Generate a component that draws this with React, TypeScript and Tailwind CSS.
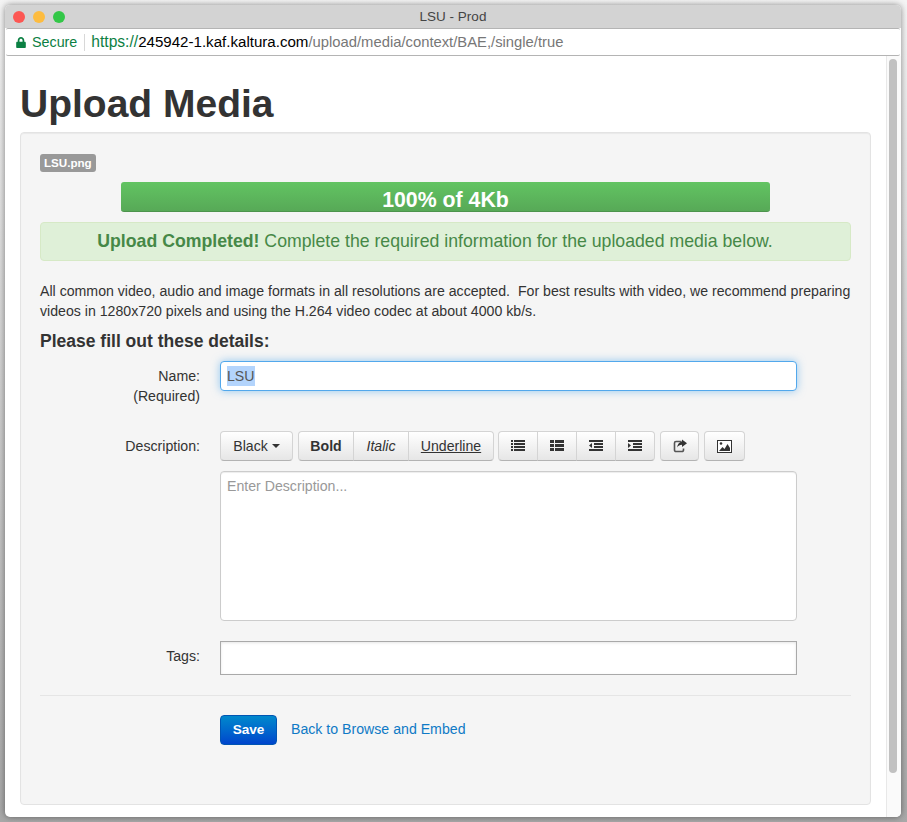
import { FaLock } from "react-icons/fa";

const btn =
  "h-[30px] flex items-center justify-center border border-[#d4d4d4] border-b-[#b3b3b3] bg-gradient-to-b from-white to-[#e6e6e6] text-[14.1px] text-[#333]";

function ListIcon() {
  return (
    <svg width="14" height="14" viewBox="0 0 14 14" fill="#333">
      {[1, 4, 7, 10].map((y) => (
        <g key={y}>
          <rect x="0" y={y} width="2" height="2" />
          <rect x="3" y={y} width="11" height="2" />
        </g>
      ))}
    </svg>
  );
}

function ThListIcon() {
  return (
    <svg width="14" height="14" viewBox="0 0 14 14" fill="#333">
      {[1, 5, 9].map((y) => (
        <g key={y}>
          <rect x="0" y={y} width="4" height="3" />
          <rect x="5" y={y} width="9" height="3" />
        </g>
      ))}
    </svg>
  );
}

function IndentIcon({ right }: { right?: boolean }) {
  return (
    <svg width="14" height="14" viewBox="0 0 14 14" fill="#333">
      <rect x="0" y="1" width="14" height="2" />
      <rect x="5" y="4" width="9" height="2" />
      <rect x="5" y="7" width="9" height="2" />
      <rect x="0" y="10" width="14" height="2" />
      {right ? <path d="M0 4l3 2.5L0 9z" /> : <path d="M3 4L0 6.5 3 9z" />}
    </svg>
  );
}

function ShareIcon() {
  return (
    <svg width="14" height="14" viewBox="0 0 14 14" fill="none">
      <path d="M8.5 2.5H3A1.5 1.5 0 0 0 1.5 4v7A1.5 1.5 0 0 0 3 12.5h6a1.5 1.5 0 0 0 1.5-1.5V9.5" stroke="#555" strokeWidth="1.6" />
      <path d="M9 0.5l5 3.7-5 3.7V5.8C6.8 5.8 5.2 6.6 4.2 8.6 4.4 5.4 6.2 3 9 2.6z" fill="#333" />
    </svg>
  );
}

function PictureIcon() {
  return (
    <svg width="15" height="13" viewBox="0 0 15 13">
      <rect x="0.5" y="0.5" width="14" height="12" fill="#fff" stroke="#333" />
      <path d="M2 11l3.5-4 2 2L10.5 4 13 8v3z" fill="#333" />
      <circle cx="4" cy="3.5" r="1.3" fill="#333" />
    </svg>
  );
}

export default function App() {
  return (
    <div className="w-[907px] h-[822px] overflow-hidden bg-gradient-to-b from-[#f4f4f4] to-[#a8a8a8] pl-[5px] pt-[5px] font-['Liberation_Sans',Arial,sans-serif] text-[14.15px] leading-[20px] text-[#333]">
      <div className="w-[896px] h-[812px] rounded-[5px] bg-white overflow-hidden flex flex-col shadow-[0_0_6px_rgba(0,0,0,0.45)]">
        <div className="h-[23px] shrink-0 bg-[#d3d3d3] flex items-center relative">
          <div className="flex gap-[8px] pl-[8px]">
            <span className="w-[12px] h-[12px] rounded-full bg-[#fc5753]" />
            <span className="w-[12px] h-[12px] rounded-full bg-[#fdbc40]" />
            <span className="w-[12px] h-[12px] rounded-full bg-[#33c748]" />
          </div>
          <span className="absolute left-0 right-0 top-[2px] text-center text-[13.5px] text-[#444]">LSU - Prod</span>
        </div>
        <div className="h-[28px] shrink-0 bg-white border-y border-[#b4b4b4] mx-[1px] flex items-center pl-[10px] text-[15px] rounded-[2px]">
          <FaLock className="text-[#0b8043] w-[10px] h-[11px]" />
          <span className="ml-[6px] text-[14.3px] text-[#0b8043]">Secure</span>
          <span className="w-px h-[17px] bg-[#d8d8d8] ml-[7px] mr-[6px]" />
          <span className="text-[15.6px] text-[#0b8043]">https://</span>
          <span className="text-[15.1px] text-black">245942-1.kaf.kaltura.com</span>
          <span className="text-[14.8px] text-[#777]">/upload/media/context/BAE,/single/true</span>
        </div>
        <div className="flex-1 flex min-h-0">
          <div className="flex-1 pl-[15px] pr-[15px] min-w-0">
            <h1 className="mt-[24px] text-[39px] leading-[48px] font-bold text-[#333]">Upload Media</h1>
            <div className="mt-[4px] h-[673px] border border-[#e3e3e3] rounded-[4px] bg-[#f5f5f5] px-[19px] pt-[21px] shadow-[inset_0_1px_1px_rgba(0,0,0,0.05)]">
              <span className="inline-block h-[18px] rounded-[3px] bg-[#999] px-[4px] text-[11.6px] leading-[18px] font-bold text-white align-top">
                LSU.png
              </span>
              <div className="mt-[8px] mx-[81px] h-[30px] rounded-[3px] bg-gradient-to-b from-[#62c462] to-[#57a957] border-b border-[#4d944d] text-center font-bold text-white">
                <span className="block text-[21.3px] leading-[36px]">100% of 4Kb</span>
              </div>
              <div className="mt-[10px] h-[39px] rounded-[4px] border border-[#d6e9c6] bg-[#dff0d8] pr-[21px] text-center text-[17.7px] leading-[37px] text-[#468847]">
                <b>Upload Completed!</b> Complete the required information for the uploaded media below.
              </div>
              <p className="mt-[20px]">
                All common video, audio and image formats in all resolutions are accepted.&nbsp; For best results with video, we recommend preparing videos in 1280x720 pixels and using the H.264 video codec at about 4000 kb/s.
              </p>
              <h4 className="mt-[10px] text-[17.5px] leading-[20px] font-bold">Please fill out these details:</h4>

              <div className="mt-[10px] flex">
                <div className="w-[160px] text-right pt-[5px] shrink-0">
                  Name:
                  <br />
                  (Required)
                </div>
                <div className="ml-[20px] w-[577px] h-[30px] rounded-[4px] border border-[#52a8ec] bg-white shadow-[0_0_8px_rgba(82,168,236,0.6)] flex items-center pl-[6px]">
                  <span className="bg-[#b3d4fc] text-[#555]">LSU</span>
                </div>
              </div>

              <div className="mt-[25px] flex">
                <div className="w-[160px] text-right pt-[5px] shrink-0">Description:</div>
                <div className="ml-[20px] w-[577px]">
                  <div className="flex gap-[5px]">
                    <button className={btn + " w-[73px] rounded-[4px] gap-[4px]"}>
                      Black
                      <span className="w-0 h-0 border-x-[4px] border-x-transparent border-t-[4px] border-t-[#333]" />
                    </button>
                    <div className="flex">
                      <button className={btn + " w-[56px] rounded-l-[4px] font-bold"}>Bold</button>
                      <button className={btn + " w-[56px] -ml-px italic"}>Italic</button>
                      <button className={btn + " w-[86px] -ml-px rounded-r-[4px] underline"}>Underline</button>
                    </div>
                    <div className="flex -ml-px">
                      <button className={btn + " w-[40px] rounded-l-[4px]"}><ListIcon /></button>
                      <button className={btn + " w-[40px] -ml-px"}><ThListIcon /></button>
                      <button className={btn + " w-[40px] -ml-px"}><IndentIcon /></button>
                      <button className={btn + " w-[40px] -ml-px rounded-r-[4px]"}><IndentIcon right /></button>
                    </div>
                    <button className={btn + " w-[39px] rounded-[4px]"}><ShareIcon /></button>
                    <button className={btn + " w-[41px] rounded-[4px]"}><PictureIcon /></button>
                  </div>
                  <div className="mt-[10px] h-[150px] rounded-[4px] border border-[#ccc] bg-white px-[6px] py-[4px] text-[#999] shadow-[inset_0_1px_1px_rgba(0,0,0,0.075)]">
                    Enter Description...
                  </div>
                </div>
              </div>

              <div className="mt-[20px] flex">
                <div className="w-[160px] text-right pt-[5px] shrink-0">Tags:</div>
                <div className="ml-[20px] w-[577px] h-[34px] border border-[#a9a9a9] bg-white shadow-[inset_0_1px_3px_rgba(0,0,0,0.1)]" />
              </div>

              <div className="mt-[20px] border-t border-[#e5e5e5] pt-[19px] pl-[180px] flex items-start">
                <button className="w-[57px] h-[30px] rounded-[4px] border border-[#0055b3] bg-gradient-to-b from-[#0088cc] to-[#0044cc] text-white font-bold text-[13.6px]">
                  Save
                </button>
                <a className="ml-[14px] mt-[4px] text-[#0f7ac6]">Back to Browse and Embed</a>
              </div>
            </div>
          </div>
          <div className="w-[15px] shrink-0 border-l border-[#e8e8e8] bg-[#fafafa] pt-[3px] pl-[2px]">
            <div className="w-[8px] h-[714px] rounded-full bg-[#c1c1c1]" />
          </div>
        </div>
      </div>
    </div>
  );
}
